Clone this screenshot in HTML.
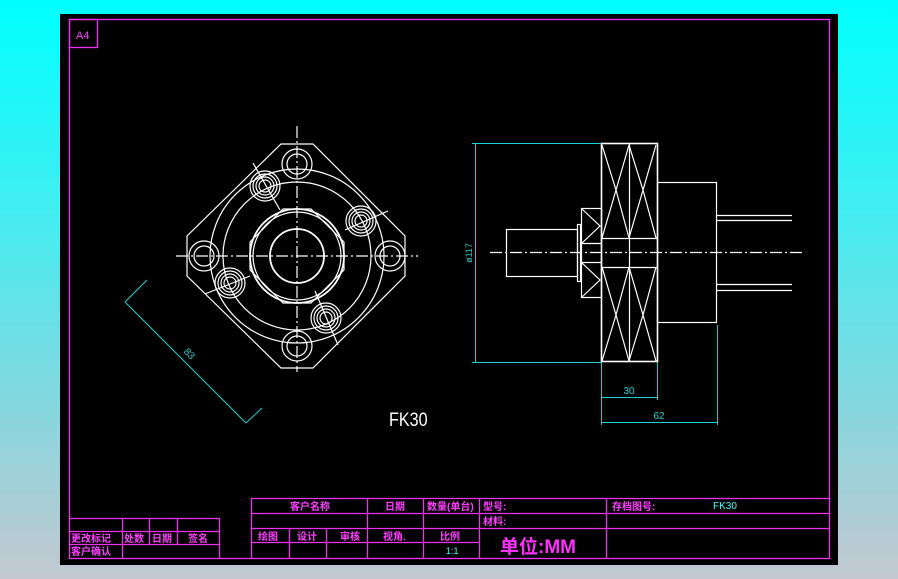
<!DOCTYPE html>
<html><head><meta charset="utf-8"><style>
html,body{margin:0;padding:0;width:898px;height:579px;overflow:hidden;background:linear-gradient(180deg,#00ffff 0%,#40eef2 35%,#90d4dc 75%,#c4c8d0 100%);}
svg{position:absolute;left:0;top:0}
.m{font-family:"Liberation Sans","Noto Sans CJK SC",sans-serif;fill:#ff40ff;font-size:10px;font-weight:bold}
</style></head><body>
<svg width="898" height="579" viewBox="0 0 898 579" xmlns="http://www.w3.org/2000/svg">
<rect x="60" y="14" width="778" height="551" fill="#000"/>
<g fill="none" stroke="#f030f0" stroke-width="1.3">
<rect x="69.5" y="19.5" width="760" height="539"/>
<rect x="69.5" y="19.5" width="28" height="28"/>
<path d="M69 518.5H219.5V558M69 531.5H219.5M69 544.5H219.5M122.5 518V558M149.5 518V545M177.5 518V545"/>
<path d="M251.5 558V498.5H829M251 513.5H829M251 528.5H829M251 542.5H479M289.5 528V558M326.5 528V558M367.5 498V558M423.5 498V558M479.5 498V558M606.5 498V558"/>
</g>
<text x="76" y="39" fill="#ff40ff" font-family="Liberation Sans,sans-serif" font-size="11">A4</text>
<g class="m">
<text x="290" y="510">客户名称</text><text x="385" y="510">日期</text><text x="427" y="510">数量(单台)</text>
<text x="483" y="510">型号:</text><text x="612" y="510">存档图号:</text>
<text x="483" y="525">材料:</text>
<text x="258" y="540">绘图</text><text x="297" y="540">设计</text><text x="340" y="540">审核</text><text x="383" y="540">视角.</text><text x="440" y="540">比例</text>
<text x="71" y="542">更改标记</text><text x="124" y="542">处数</text><text x="152" y="542">日期</text><text x="188" y="542">签名</text>
<text x="71" y="555">客户确认</text>
</g>
<text x="713" y="509" fill="#40ffff" font-family="Liberation Sans,sans-serif" font-size="10">FK30</text>
<text x="446" y="554" fill="#40ffff" font-family="Liberation Sans,sans-serif" font-size="9">1:1</text>
<text x="500" y="553" fill="#ff30ff" font-family="Liberation Sans,Noto Sans CJK SC,sans-serif" font-weight="bold" font-size="19">单位:MM</text>

<g fill="none" stroke="#fff" stroke-width="1.2">
<polygon points="281,144 313,144 405,236 405,276 313,368 281,368 187,276 187,236"/>
<circle cx="297" cy="256" r="87"/>
<circle cx="297" cy="256" r="74"/>
<circle cx="297" cy="256" r="47" stroke-width="1.8"/>
<circle cx="297" cy="256" r="44"/>
<circle cx="297" cy="256" r="27" stroke-width="1.8"/>
<polygon points="283,209 311,209 344,242 344,270 311,303 283,303 250,270 250,242"/>
<circle cx="297" cy="164" r="15"/><circle cx="297" cy="164" r="10"/>
<circle cx="297" cy="346" r="15"/><circle cx="297" cy="346" r="10"/>
<circle cx="204" cy="256" r="15"/><circle cx="204" cy="256" r="10"/>
<circle cx="390" cy="256" r="15"/><circle cx="390" cy="256" r="10"/>
<circle cx="265" cy="186" r="15"/><circle cx="265" cy="186" r="12"/><circle cx="265" cy="186" r="9"/><circle cx="265" cy="186" r="6"/>
<circle cx="361" cy="221" r="15"/><circle cx="361" cy="221" r="12"/><circle cx="361" cy="221" r="9"/><circle cx="361" cy="221" r="6"/>
<circle cx="230" cy="283" r="15"/><circle cx="230" cy="283" r="12"/><circle cx="230" cy="283" r="9"/><circle cx="230" cy="283" r="6"/>
<circle cx="326" cy="318" r="15"/><circle cx="326" cy="318" r="12"/><circle cx="326" cy="318" r="9"/><circle cx="326" cy="318" r="6"/>
<path d="M253 163L280 210M388 211L345 230M205 294L250 276M315 291L338 345"/>
<path d="M297 126V372M176 256H418" stroke-dasharray="12 3 2 3"/>
</g>
<g stroke="#20d0d0" fill="none">
<path d="M125 302L246 423M125 302L147 280M246 423L262 408"/>
</g>
<text transform="translate(187,356) rotate(45)" fill="#20d0d0" font-family="Liberation Sans,sans-serif" font-size="10" text-anchor="middle">83</text>
<text transform="translate(389,426) scale(0.85,1)" fill="#fff" font-family="Liberation Sans,sans-serif" font-size="19">FK30</text>

<g fill="none" stroke="#fff" stroke-width="1.2">
<rect x="601.5" y="143.5" width="56" height="218" stroke-width="1.6"/>
<path d="M601 238.5H657M601 267.5H657M629.5 143V362"/>
<path d="M602 145L616 190L629 145M629 145L643 190L656 145M602 238L616 190L629 238M629 238L643 190L656 238"/>
<path d="M602 267L616 315L629 267M629 267L643 315L656 267M602 361L616 315L629 361M629 361L643 315L656 361"/>
<rect x="657.5" y="182.5" width="59" height="140"/>
<path d="M717 215.5H792M717 220.5H792M717 284.5H792M717 290.5H792"/>
<rect x="581.5" y="208.5" width="20" height="89"/>
<path d="M581 243.5H601M581 262.5H601M582 209L600 226L582 243M582 263L600 280L582 297"/>
<rect x="577.5" y="224.5" width="3" height="57"/>
<rect x="506.5" y="229.5" width="71" height="47"/>
<path d="M490 252.5H805" stroke-dasharray="12 3 2 3"/>
</g>
<g stroke="#20d0d0" fill="none">
<path d="M475.5 143V362M472 143.5H601M472 362.5H601"/>
<path d="M601.5 362V425M657.5 362V400M717.5 325V425M601 397.5H657M601 422.5H717"/>
</g>
<text transform="translate(472,253) rotate(-90)" fill="#20d0d0" font-family="Liberation Sans,sans-serif" font-size="9" text-anchor="middle">ø117</text>
<text x="629" y="394" fill="#20d0d0" font-family="Liberation Sans,sans-serif" font-size="10" text-anchor="middle">30</text>
<text x="659" y="419" fill="#20d0d0" font-family="Liberation Sans,sans-serif" font-size="10" text-anchor="middle">62</text>
</svg>
</body></html>
